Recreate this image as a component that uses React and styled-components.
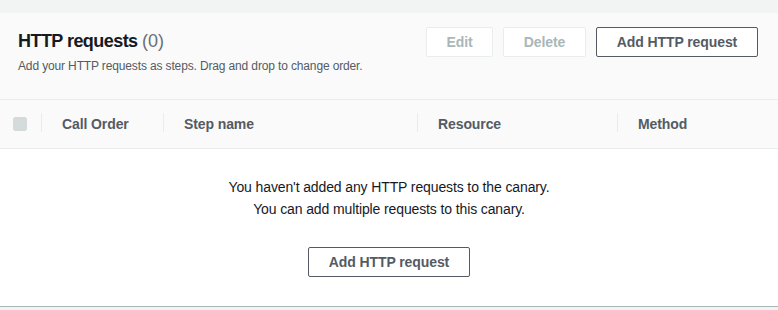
import React from "react";
import styled, { createGlobalStyle } from "styled-components";

const Global = createGlobalStyle`
  html, body { margin: 0; padding: 0; background: #f2f3f3; }
  body { font-family: "Liberation Sans", Arial, sans-serif; color: #16191f; }
  * { box-sizing: border-box; }
`;

const Page = styled.div`
  padding-top: 13px;
`;

const Panel = styled.section`
  background: #fafafa;
  border-bottom: 1px solid #aab7b8;
  box-shadow: 0 1px 0 0 #d5dbdb;
`;

const Header = styled.header`
  display: flex;
  justify-content: space-between;
  align-items: flex-start;
  padding: 14px 20px 0 18px;
  height: 87px;
  border-bottom: 1px solid #eaeded;
`;

const TitleBlock = styled.div`
  padding-top: 3px;
`;

const Title = styled.h2`
  margin: 0;
  font-size: 18px;
  line-height: 22px;
  font-weight: 700;
  letter-spacing: -0.55px;
  color: #16191f;
`;

const Count = styled.span`
  font-weight: 400;
  letter-spacing: 0;
  color: #687078;
`;

const Description = styled.p`
  margin: 6px 0 0;
  font-size: 12px;
  line-height: 16px;
  letter-spacing: -0.14px;
  color: #545b64;
`;

const Actions = styled.div`
  display: flex;
  gap: 10px;
`;

const Button = styled.button`
  font-family: inherit;
  font-size: 14px;
  font-weight: 700;
  line-height: 20px;
  padding: 4px 19px;
  border-radius: 2px;
  background: #fff;
  letter-spacing: -0.1px;
  border: 1px solid ${(p) => (p.disabled ? "#eaeded" : "#545b64")};
  color: ${(p) => (p.disabled ? "#aab7b8" : "#545b64")};
  cursor: ${(p) => (p.disabled ? "default" : "pointer")};
  width: ${(p) => p.$width || "auto"};
`;

const HeadRow = styled.div`
  display: grid;
  grid-template-columns: 41px 122px 254px 200px 1fr;
  height: 49px;
  align-items: center;
  background: #fafafa;
  border-bottom: 1px solid #eaeded;
`;

const CheckCell = styled.div`
  padding-left: 13px;
  display: flex;
  align-items: center;
`;

const Checkbox = styled.span`
  width: 14px;
  height: 14px;
  border-radius: 2px;
  background: #d5dbdb;
  display: block;
`;

const HeadCell = styled.div`
  position: relative;
  padding-left: 21px;
  font-size: 14px;
  font-weight: 700;
  color: #545b64;
  line-height: 20px;
  letter-spacing: -0.1px;
  &::before {
    content: "";
    position: absolute;
    left: 0;
    top: -1px;
    height: 19px;
    width: 1px;
    background: #eaeded;
  }
`;

const Empty = styled.div`
  background: #fff;
  padding: 27px 20px 29px;
  display: flex;
  flex-direction: column;
  align-items: center;
  text-align: center;
`;

const EmptyText = styled.p`
  margin: 0;
  font-size: 14px;
  line-height: 22px;
  letter-spacing: -0.12px;
  color: #16191f;
`;

const EmptyAction = styled.div`
  margin-top: 27px;
`;

export default function App() {
  return (
    <Page>
      <Global />
      <Panel>
        <Header>
          <TitleBlock>
            <Title>
              HTTP requests <Count>(0)</Count>
            </Title>
            <Description>
              Add your HTTP requests as steps. Drag and drop to change order.
            </Description>
          </TitleBlock>
          <Actions>
            <Button disabled $width="67px">Edit</Button>
            <Button disabled $width="83px">Delete</Button>
            <Button $width="162px">Add HTTP request</Button>
          </Actions>
        </Header>
        <HeadRow>
          <CheckCell>
            <Checkbox />
          </CheckCell>
          <HeadCell>Call Order</HeadCell>
          <HeadCell>Step name</HeadCell>
          <HeadCell>Resource</HeadCell>
          <HeadCell>Method</HeadCell>
        </HeadRow>
        <Empty>
          <EmptyText>
            You haven't added any HTTP requests to the canary.
            <br />
            You can add multiple requests to this canary.
          </EmptyText>
          <EmptyAction>
            <Button $width="162px">Add HTTP request</Button>
          </EmptyAction>
        </Empty>
      </Panel>
    </Page>
  );
}
